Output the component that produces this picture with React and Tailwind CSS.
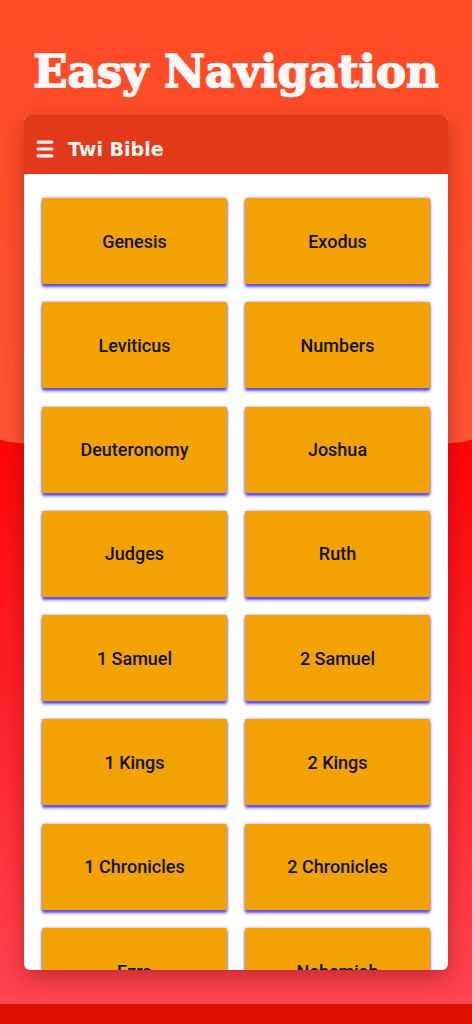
const books = [
  "Genesis",
  "Exodus",
  "Leviticus",
  "Numbers",
  "Deuteronomy",
  "Joshua",
  "Judges",
  "Ruth",
  "1 Samuel",
  "2 Samuel",
  "1 Kings",
  "2 Kings",
  "1 Chronicles",
  "2 Chronicles",
  "Ezra",
  "Nehemiah",
];

function MenuIcon() {
  return (
    <svg width="18" height="20" viewBox="0 0 18 20" className="shrink-0">
      <rect x="0.5" y="1.5" width="17" height="3.2" rx="1.6" fill="#fff5f0" />
      <rect x="0.5" y="8.4" width="17" height="3.2" rx="1.6" fill="#fff5f0" />
      <rect x="0.5" y="15.3" width="17" height="3.2" rx="1.6" fill="#fff5f0" />
    </svg>
  );
}

export default function App() {
  return (
    <div className="relative flex min-h-[1024px] w-full flex-col overflow-hidden bg-[linear-gradient(180deg,#ff0606_440px,#ff4452_1000px)]">
      {/* orange top band */}
      <div className="absolute inset-x-0 top-0 h-[449px] rounded-b-[50%_10px] bg-[linear-gradient(180deg,#ff4a25,#ff5535)]" />

      <h1 className="relative pt-[40px] text-center font-['DejaVu_Serif',serif] text-[45px] font-black leading-[64px] text-[#fff6f6] [-webkit-text-stroke:1.6px_#fff6f6]">
        Easy Navigation
      </h1>

      <div className="relative mx-[24px] mt-[11px] h-[855px] overflow-hidden rounded-[6px] bg-white shadow-[0_8px_22px_rgba(90,0,0,0.35)]">
        <div className="flex h-[59px] items-center gap-[14px] bg-[#e1391a] pl-[12px] pt-[9px]">
          <MenuIcon />
          <span className="font-['DejaVu_Sans',sans-serif] text-[19px] font-bold text-[#fff5f0]">
            Twi Bible
          </span>
        </div>
        <div className="grid grid-cols-2 gap-x-[18px] gap-y-[18.3px] px-[18px] pt-[24px]">
          {books.map((b) => (
            <button
              key={b}
              type="button"
              className="flex h-[86px] items-center justify-center rounded-[2px] bg-[#f2a303] font-['Roboto',sans-serif] text-[18px] font-medium text-[#111] shadow-[0_3px_3px_#5a4cf2,0_0_3px_#9286ff]"
            >
              {b}
            </button>
          ))}
        </div>
      </div>

      <div className="relative mt-auto h-[20px] bg-[#dd1100]" />
    </div>
  );
}
